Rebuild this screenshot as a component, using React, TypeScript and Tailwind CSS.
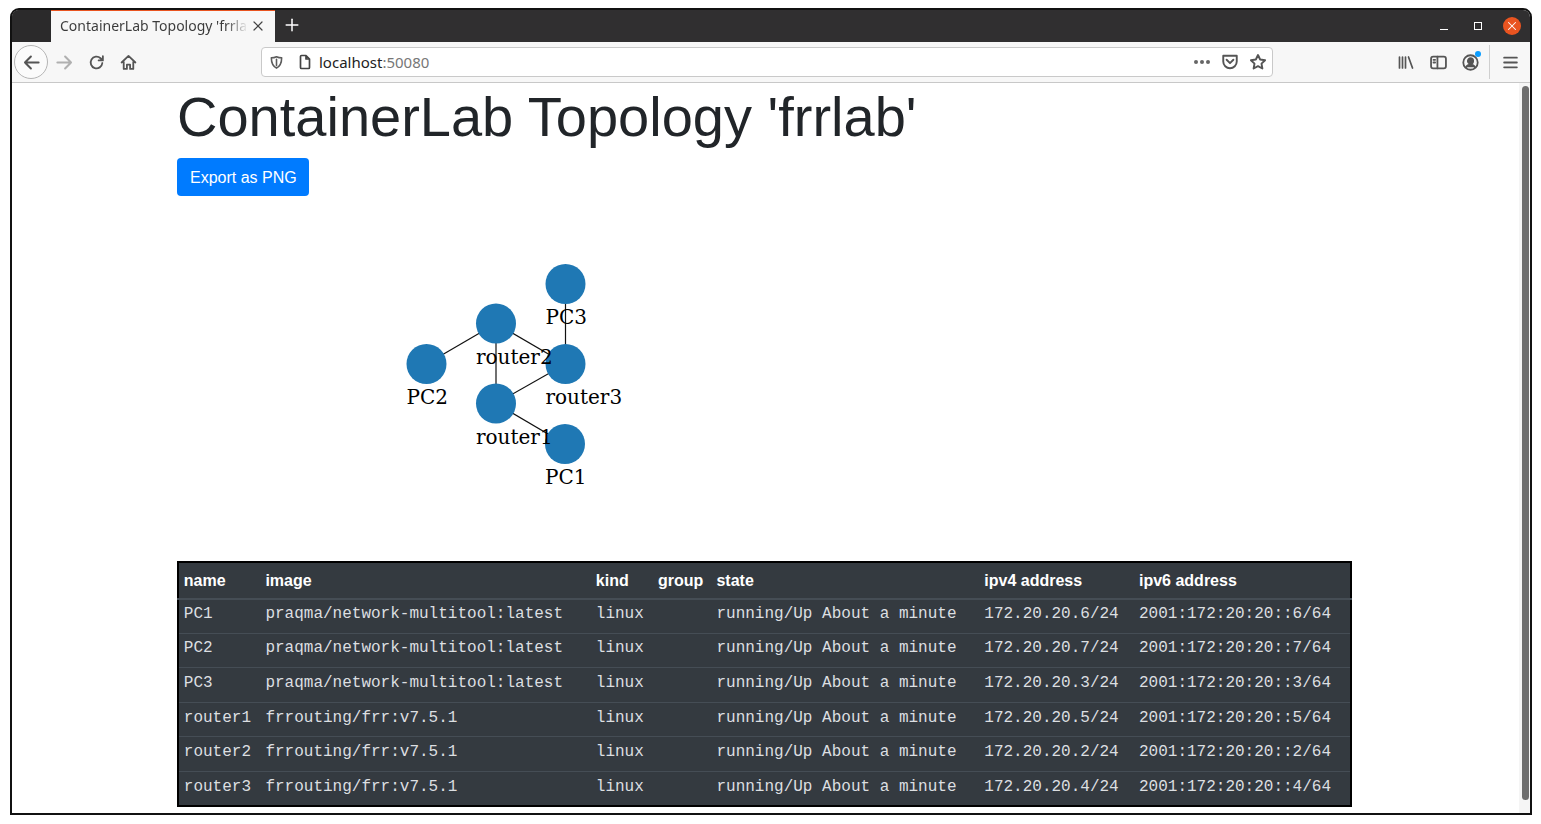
import React from "react";
import { Plus, X } from "lucide-react";

const rows = [
  ["PC1", "praqma/network-multitool:latest", "linux", "", "running/Up About a minute", "172.20.20.6/24", "2001:172:20:20::6/64"],
  ["PC2", "praqma/network-multitool:latest", "linux", "", "running/Up About a minute", "172.20.20.7/24", "2001:172:20:20::7/64"],
  ["PC3", "praqma/network-multitool:latest", "linux", "", "running/Up About a minute", "172.20.20.3/24", "2001:172:20:20::3/64"],
  ["router1", "frrouting/frr:v7.5.1", "linux", "", "running/Up About a minute", "172.20.20.5/24", "2001:172:20:20::5/64"],
  ["router2", "frrouting/frr:v7.5.1", "linux", "", "running/Up About a minute", "172.20.20.2/24", "2001:172:20:20::2/64"],
  ["router3", "frrouting/frr:v7.5.1", "linux", "", "running/Up About a minute", "172.20.20.4/24", "2001:172:20:20::4/64"],
];

const headers = ["name", "image", "kind", "group", "state", "ipv4 address", "ipv6 address"];
const colWidths = ["w-[82.5px]", "w-[330px]", "w-[62px]", "w-[58.5px]", "w-[267.5px]", "w-[154.5px]", "w-[216.5px]"];

// coordinates are relative to the graph picture, which starts at 177,196
const nodes = [
  { label: "PC3", x: 388.5, y: 88, tx: 368.5, ty: 128 },
  { label: "router2", x: 319, y: 127.5, tx: 299, ty: 168 },
  { label: "PC2", x: 249.5, y: 168, tx: 229.5, ty: 208 },
  { label: "router3", x: 388.5, y: 168, tx: 368.5, ty: 208 },
  { label: "router1", x: 319, y: 207.5, tx: 299, ty: 248 },
  { label: "PC1", x: 388, y: 248, tx: 368, ty: 288 },
];

const edges = [
  [0, 3],
  [1, 2],
  [1, 3],
  [1, 4],
  [3, 4],
  [4, 5],
];

function ToolIcon({ className, children }: { className?: string; children: React.ReactNode }) {
  return (
    <svg viewBox="0 0 16 16" fill="none" stroke="currentColor" strokeWidth="1.7" strokeLinecap="round" strokeLinejoin="round" className={className}>
      {children}
    </svg>
  );
}

function TabBar() {
  return (
    <div className="flex h-[32px] bg-[#302f30] shrink-0">
      <div className="w-[39px] bg-[#2b2a2b]" />
      <div className="w-[224px] bg-[#f7f7f7] border-t-2 border-[#e95420] flex items-center pl-[9px] pb-[2px] -mt-px">
        <span className="w-[188px] whitespace-nowrap overflow-hidden text-[14px] leading-[20px] font-['Noto_Sans',sans-serif] bg-linear-to-r from-[#3a3a3a] from-[88%] to-transparent bg-clip-text text-transparent">
          ContainerLab Topology 'frrlab'
        </span>
        <X size={16} strokeWidth={1.8} className="ml-[2px] text-[#444]" />
      </div>
      <div className="w-[34px] flex items-center justify-center pb-[2px]">
        <Plus size={20} strokeWidth={1.8} className="text-white" />
      </div>
      <div className="flex-1" />
      <div className="flex items-center pr-[9px]">
        <div className="w-[8px] h-px bg-white mt-[6px] mr-[26px]" />
        <div className="w-[8px] h-[8px] border border-white mr-[21px]" />
        <div className="w-[18px] h-[18px] rounded-full bg-[#e95420] flex items-center justify-center">
          <X size={14} strokeWidth={1.8} className="text-white" />
        </div>
      </div>
    </div>
  );
}

function Toolbar() {
  return (
    <div className="flex items-center h-[41px] bg-[#f7f7f7] border-b border-[#c8c8c8] shrink-0 text-[#555]">
      <div className="ml-[2px] w-[34px] h-[34px] rounded-full border border-[#b5b5b5] bg-[#fbfbfb] flex items-center justify-center">
        <ToolIcon className="w-[19px] h-[19px]">
          <path d="M14 8H2.500M7.500 3 2.500 8l5 5" />
        </ToolIcon>
      </div>
      <div className="w-[32px] flex justify-center text-[#b0b0b0]">
        <ToolIcon className="w-[19px] h-[19px]">
          <path d="M2 8h11.500M8.500 3l5 5-5 5" />
        </ToolIcon>
      </div>
      <div className="w-[32px] flex justify-center">
        <ToolIcon className="w-[17px] h-[17px]">
          <path d="M13.500 8.500A5.500 5.500 0 1 1 11.800 4l1.700 1.600M14 2v4h-4" />
        </ToolIcon>
      </div>
      <div className="w-[32px] flex justify-center">
        <ToolIcon className="w-[17px] h-[17px]">
          <path d="M1.500 8 8 1.800 14.500 8M3.500 7v7h3v-4h3v4h3V7" />
        </ToolIcon>
      </div>
      <div className="ml-[117px] w-[1012px] h-[30px] bg-white border border-[#c9c9c9] rounded-[4px] flex items-center pl-[7px] pr-[5px]">
        <ToolIcon className="w-[15px] h-[15px] text-[#5c5c5c]">
          <path d="M8 1.800c2 .9 3.800 1.200 5.500 1.200 0 5-1.500 9-5.500 11C4 12 2.500 8 2.500 3 4.200 3 6 2.700 8 1.800ZM8 4.500v6.800" />
        </ToolIcon>
        <ToolIcon className="w-[16px] h-[16px] ml-[13px] text-[#444]">
          <path d="M3.500 2.500c0-.6.400-1 1-1h4.500l3.500 3.500v8.500c0 .6-.400 1-1 1h-7c-.6 0-1-.400-1-1ZM9 1.500v3.500h3.500" />
        </ToolIcon>
        <span className="ml-[6px] text-[15px] font-['Noto_Sans',sans-serif] text-[#222]">
          localhost<span className="text-[#777]">:50080</span>
        </span>
        <div className="flex-1" />
        <div className="flex gap-[2px] mr-[11px]">
          <div className="w-[4px] h-[4px] rounded-full bg-[#666]" />
          <div className="w-[4px] h-[4px] rounded-full bg-[#666]" />
          <div className="w-[4px] h-[4px] rounded-full bg-[#666]" />
        </div>
        <ToolIcon className="w-[18px] h-[18px] mr-[10px]">
          <path d="M2 2.500h12v5a6 6 0 0 1-12 0ZM5 6l3 3 3-3" />
        </ToolIcon>
        <ToolIcon className="w-[18px] h-[18px]">
          <path d="m8 1.800 1.900 4 4.400.6-3.200 3 .8 4.400L8 11.700l-3.900 2.100.8-4.400-3.200-3 4.400-.6Z" />
        </ToolIcon>
      </div>
      <div className="ml-[125px] w-[16px] flex justify-center">
        <ToolIcon className="w-[17px] h-[17px]">
          <path d="M1.500 2.500v11M4.500 2.500v11M7.500 2.500v11M10.500 2.500l4 11" />
        </ToolIcon>
      </div>
      <ToolIcon className="w-[17px] h-[17px] ml-[16px]">
        <rect x="1" y="2.500" width="14" height="11" rx="2" />
        <path d="M7 2.500v11M3.300 5.500h1.500M3.300 8h1.500" />
      </ToolIcon>
      <div className="relative ml-[15px] w-[17px] h-[17px]">
        <ToolIcon className="w-[17px] h-[17px]">
          <circle cx="8" cy="8" r="6.800" />
          <circle cx="8" cy="6.500" r="2.500" fill="currentColor" />
          <path d="M3.800 12.500c1-2 2.500-2.500 4.200-2.500s3.200.5 4.200 2.500" fill="currentColor" />
        </ToolIcon>
        <div className="absolute -top-[3px] -right-[2px] w-[6px] h-[6px] rounded-full bg-[#0a9dff]" />
      </div>
      <div className="ml-[10px] w-px h-[34px] bg-[#cfcfcf]" />
      <ToolIcon className="w-[17px] h-[17px] ml-[12px]">
        <path d="M2 3.500h12M2 8h12M2 12.500h12" />
      </ToolIcon>
    </div>
  );
}

function Graph() {
  return (
    <svg viewBox="0 0 600 365" className="w-[600px] h-[365px] block">
      {edges.map(([a, b], i) => (
        <line key={i} x1={nodes[a].x} y1={nodes[a].y} x2={nodes[b].x} y2={nodes[b].y} stroke="#111" strokeWidth="1.2" />
      ))}
      {nodes.map((n) => (
        <circle key={n.label} cx={n.x} cy={n.y} r="20" fill="#1f78b4" />
      ))}
      {nodes.map((n) => (
        <text key={n.label} x={n.tx} y={n.ty} fontFamily="'DejaVu Serif', serif" fontSize="20" fill="#000">
          {n.label}
        </text>
      ))}
    </svg>
  );
}

function ClabTable() {
  return (
    <table className="w-[1175px] table-fixed border-collapse border-2 border-black bg-[#343a40] text-white">
      <thead>
        <tr className="border-b-2 border-[#454d55]">
          {headers.map((h, i) => (
            <th key={h} className={`${colWidths[i]} px-[4.8px] pt-[5.5px] pb-[5px] text-left text-[16px] font-bold leading-[24px] font-['Liberation_Sans',sans-serif]`}>
              {h}
            </th>
          ))}
        </tr>
      </thead>
      <tbody>
        {rows.map((row) => (
          <tr key={row[0]} className="border-t border-[#454d55]">
            {row.map((cell, i) => (
              <td key={i} className="h-[34.6px] px-[4.8px] pb-[4px] pt-0 align-middle whitespace-nowrap text-[16px] leading-[24px] font-['Liberation_Mono',monospace] text-[#dcdfe1]">
                {cell}
              </td>
            ))}
          </tr>
        ))}
      </tbody>
    </table>
  );
}

export default function App() {
  return (
    <div className="h-screen bg-white overflow-hidden pt-[8px] pl-[10px]">
      <div className="w-[1522px] h-[807px] border-2 border-[#111] rounded-t-[9px] overflow-hidden flex flex-col bg-white">
        <TabBar />
        <Toolbar />
        <div className="flex flex-1 min-h-0">
          <div className="flex-1 pl-[165px] overflow-hidden">
            <h1 className="text-[56px] leading-[67px] font-['Liberation_Sans',sans-serif] text-[#212529] mb-[8px] mt-0">
              ContainerLab Topology 'frrlab'
            </h1>
            <button className="h-[38px] pl-[13px] pr-[12px] pt-[2px] rounded-[4px] bg-[#007bff] text-white text-[16px] font-['Liberation_Sans',sans-serif] block">
              Export as PNG
            </button>
            <Graph />
            <ClabTable />
          </div>
          <div className="w-[11px] bg-[#f5f5f5] pt-[3px] pl-[3px]">
            <div className="w-[7px] h-[714px] rounded-full bg-[#6e6e6e]" />
          </div>
        </div>
      </div>
    </div>
  );
}
